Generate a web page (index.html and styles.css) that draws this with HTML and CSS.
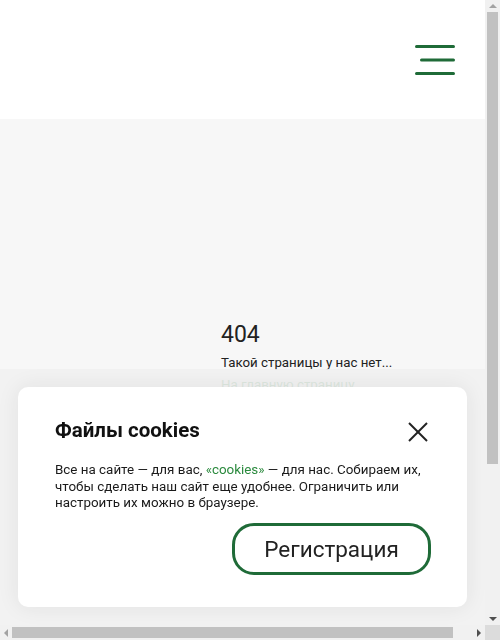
FILE: index.html
```html
<!DOCTYPE html>
<html lang="ru">
<head>
<meta charset="utf-8">
<title>404</title>
<link rel="stylesheet" href="styles.css">
</head>
<body>
<div class="page">
  <header class="header">
    <button class="burger" aria-label="Меню">
      <svg width="40" height="30" viewBox="0 0 40 30">
        <line x1="1.5" y1="1.5" x2="38.5" y2="1.5"/>
        <line x1="6.5" y1="15" x2="38.5" y2="15"/>
        <line x1="1.5" y1="28.5" x2="38.5" y2="28.5"/>
      </svg>
    </button>
  </header>
  <main class="main">
    <section class="notfound">
      <h1 class="code">404</h1>
      <p class="msg">Такой страницы у нас нет...</p>
      <a class="home" href="#">На главную страницу</a>
    </section>
  </main>
</div>
<div class="cookie-wrap">
  <div class="cookie">
    <div class="cookie-head">
      <h2 class="cookie-title">Файлы cookies</h2>
      <button class="close" aria-label="Закрыть">
        <svg width="20" height="20" viewBox="0 0 20 20">
          <line x1="1" y1="1" x2="19" y2="19"/>
          <line x1="19" y1="1" x2="1" y2="19"/>
        </svg>
      </button>
    </div>
    <p class="cookie-text">Все на сайте — для вас, <a href="#">«cookies»</a> — для нас. Собираем их, чтобы сделать наш сайт еще удобнее. Ограничить или настроить их можно в браузере.</p>
    <div class="cookie-actions">
      <button class="btn">Регистрация</button>
    </div>
  </div>
</div>
<div class="sb sb-v" aria-hidden="true">
  <span class="arrow arrow-up"></span>
  <span class="thumb thumb-v"></span>
  <span class="arrow arrow-down"></span>
</div>
<div class="sb sb-h" aria-hidden="true">
  <span class="arrow arrow-left"></span>
  <span class="thumb thumb-h"></span>
  <span class="arrow arrow-right"></span>
</div>
<div class="sb-corner" aria-hidden="true"></div>
</body>
</html>
```
FILE: styles.css
```css
html, body {
  margin: 0;
  padding: 0;
}
body {
  font-family: Roboto, "Noto Sans", sans-serif;
  color: #222;
  background: #f7f7f7;
}
.page {
  width: 500px;
}
.header {
  height: 119px;
  background: #fff;
  display: flex;
  justify-content: flex-end;
  align-items: center;
  padding-right: 45px;
  box-sizing: border-box;
}
.burger {
  border: 0;
  background: none;
  padding: 0;
  width: 40px;
  height: 30px;
  display: block;
}
.burger svg {
  display: block;
}
.burger line {
  stroke: #1f6b38;
  stroke-width: 3;
  stroke-linecap: round;
}
.main {
  background: #f7f7f7;
  min-height: 712px;
  padding: 202px 0 0 221px;
  box-sizing: border-box;
}
.code {
  margin: 0;
  font-size: 23px;
  line-height: 28px;
  font-weight: 400;
  color: #222;
}
.msg {
  margin: 5px 0 0;
  font-size: 13.3px;
  line-height: 18px;
}
.home {
  display: block;
  margin-top: 4px;
  font-size: 13.3px;
  line-height: 18px;
  color: #2b8a3e;
  text-decoration: none;
}
.cookie-wrap {
  position: fixed;
  left: 0;
  right: 15px;
  bottom: 15px;
  padding: 18px;
  background: rgba(241, 241, 241, 0.9);
  overflow: hidden;
}
.cookie {
  background: #fff;
  border-radius: 10px;
  padding: 30px 36px 32px 37px;
  box-shadow: 0 0 22px rgba(0, 0, 0, 0.08);
}
.cookie-head {
  display: flex;
  justify-content: space-between;
  align-items: center;
}
.cookie-title {
  margin: 0;
  font-size: 20.5px;
  line-height: 26px;
  font-weight: 700;
  color: #111;
}
.close {
  border: 0;
  background: none;
  padding: 0;
  width: 20px;
  height: 20px;
  margin-top: 4px;
  margin-right: 3px;
}
.close svg {
  display: block;
}
.close line {
  stroke: #222;
  stroke-width: 2;
}
.cookie-text {
  margin: 19px 0 0;
  font-size: 13.4px;
  line-height: 16.5px;
  color: #1a1a1a;
}
.cookie-text a {
  color: #2b8a3e;
  text-decoration: none;
}
.cookie-actions {
  display: flex;
  justify-content: flex-end;
  margin-top: 11.5px;
}
.btn {
  width: 199px;
  height: 52px;
  border: 3px solid #1f6b38;
  border-radius: 22px;
  background: #fff;
  font-family: Roboto, "Noto Sans", sans-serif;
  font-size: 22.5px;
  color: #222;
  padding: 0;
}

/* scrollbar visuals */
.sb {
  position: fixed;
  background: #f1f1f1;
  display: flex;
  align-items: center;
  box-sizing: border-box;
}
.sb-v {
  top: 0;
  right: 0;
  width: 15px;
  height: 625px;
  flex-direction: column;
  padding: 0 2px;
}
.sb-h {
  left: 0;
  bottom: 0;
  height: 15px;
  width: 485px;
  padding: 2px 0;
}
.sb-corner {
  position: fixed;
  right: 0;
  bottom: 0;
  width: 15px;
  height: 15px;
  background: #dcdcdc;
}
.thumb {
  background: #c1c1c1;
}
.thumb-v {
  width: 11px;
  height: 452px;
  margin-top: 0;
}
.thumb-h {
  height: 11px;
  width: 441px;
}
.arrow {
  width: 0;
  height: 0;
  border: 4px solid transparent;
  flex: none;
}
.arrow-up {
  border-bottom-color: #a3a3a3;
  border-top-width: 0;
  margin: 4px 0 4px;
}
.arrow-down {
  border-top-color: #505050;
  border-bottom-width: 0;
  margin-top: auto;
  margin-bottom: 4px;
}
.arrow-left {
  border-right-color: #a3a3a3;
  border-left-width: 0;
  margin: 0 4px 0 4px;
}
.arrow-right {
  border-left-color: #505050;
  border-right-width: 0;
  margin-left: auto;
  margin-right: 4px;
}
```
